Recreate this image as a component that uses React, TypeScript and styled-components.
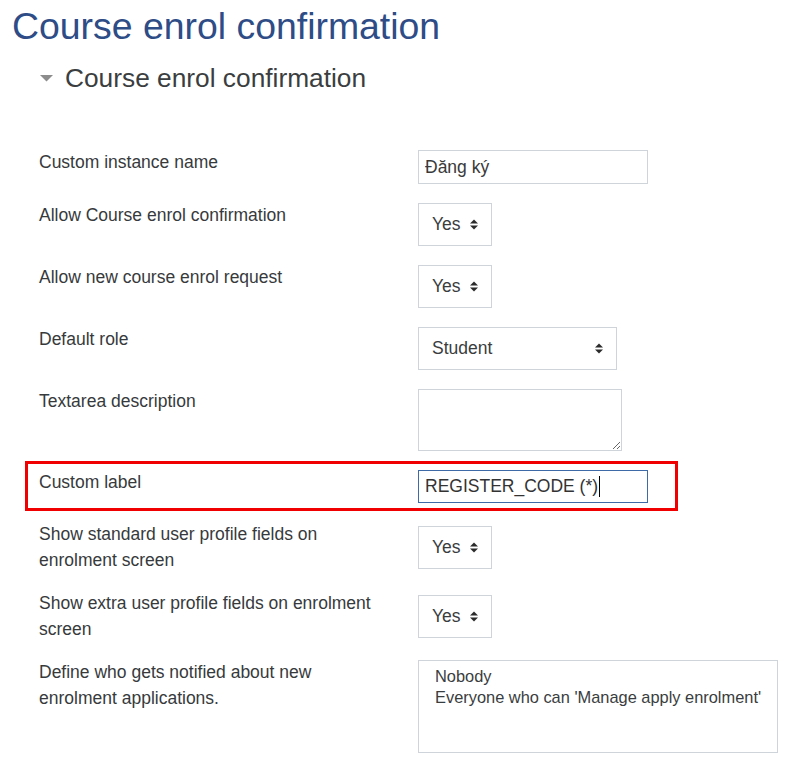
import React from "react";
import styled, { createGlobalStyle } from "styled-components";

const GlobalStyle = createGlobalStyle`
  html, body { margin: 0; padding: 0; background: #ffffff; }
  body { font-family: "Liberation Sans", Arial, sans-serif; color: #373a3c; }
  *, *::before, *::after { box-sizing: border-box; }
`;

const Page = styled.div`
  padding: 4px 12px 0 12px;
  width: 805px;
`;

const Title = styled.h1`
  margin: 0;
  font-size: 37.4px;
  line-height: 45px;
  font-weight: 400;
  color: #2e4c86;
`;

const Section = styled.section`
  margin-top: 13px;
`;

const Legend = styled.h2`
  margin: 0;
  padding-left: 28px;
  display: flex;
  align-items: center;
  gap: 12px;
  font-size: 26.3px;
  line-height: 32px;
  font-weight: 400;
  color: #3b3e40;
`;

const Fields = styled.div`
  margin-top: 55px;
  padding-left: 27px;
`;

const Row = styled.div<{ $highlight?: boolean }>`
  position: relative;
  display: flex;
  align-items: stretch;
  margin-bottom: 17px;
  ${(p) =>
    p.$highlight
      ? `
    &::after {
      content: "";
      position: absolute;
      left: -14px;
      top: -8px;
      width: 653px;
      bottom: -7px;
      border: 3px solid #f00000;
      pointer-events: none;
    }
  `
      : ""}
`;

const Label = styled.label`
  flex: 0 0 379px;
  padding-right: 30px;
  font-size: 17.5px;
  line-height: 26px;
  color: #373a3c;
`;

const Control = styled.div`
  flex: 1;
  display: flex;
  align-items: center;
  & > * {
    margin: 1px 0;
  }
`;

const TextInput = styled.input`
  width: 230px;
  height: 34px;
  border: 1px solid #ced4da;
  border-radius: 0;
  padding: 0 6px;
  font-family: "Liberation Sans", Arial, sans-serif;
  font-size: 17.5px;
  color: #3a3a3a;
  background: #fff;
  outline: none;
`;

const FocusedInput = styled.div`
  width: 230px;
  height: 33px;
  border: 1px solid #3f6aa8;
  padding: 0 6px;
  display: flex;
  align-items: center;
  font-size: 17.5px;
  color: #333;
  background: #fff;
`;

const Caret = styled.span`
  display: inline-block;
  width: 1px;
  height: 21px;
  background: #000;
  margin-left: 1px;
`;

const SelectBox = styled.div<{ $width?: number }>`
  height: 43px;
  ${(p) => (p.$width ? `width: ${p.$width}px;` : "")}
  display: inline-flex;
  align-items: center;
  justify-content: space-between;
  gap: 9px;
  padding: 0 13px 0 13px;
  border: 1px solid #ced4da;
  font-size: 17.5px;
  color: #3a3d40;
  background: #fff;
`;

const TextArea = styled.textarea`
  width: 204px;
  height: 62px;
  border: 1px solid #ced4da;
  border-radius: 0;
  font-family: "Liberation Sans", Arial, sans-serif;
  font-size: 17.5px;
  outline: none;
  resize: both;
`;

const ListBox = styled.div`
  width: 360px;
  height: 93px;
  border: 1px solid #ced4da;
  padding: 5px 0 0 16px;
  font-size: 16.4px;
  line-height: 21px;
  color: #3a3d40;
  align-self: flex-start;
`;

const Option = styled.div``;

const SortIcon = () => (
  <svg width="8" height="11" viewBox="0 0 8 11" aria-hidden="true">
    <path d="M0 4.5 L4 0.5 L8 4.5 Z" fill="#2b2b2b" />
    <path d="M0 6.5 L4 10.5 L8 6.5 Z" fill="#2b2b2b" />
  </svg>
);

const Triangle = () => (
  <svg width="13" height="7" viewBox="0 0 13 7" aria-hidden="true">
    <path d="M0 0 L13 0 L6.5 6.5 Z" fill="#8c8c8c" />
  </svg>
);

const Select = ({ value, width }: { value: string; width?: number }) => (
  <SelectBox $width={width}>
    <span>{value}</span>
    <SortIcon />
  </SelectBox>
);

export default function App() {
  return (
    <>
      <GlobalStyle />
      <Page>
        <Title>Course enrol confirmation</Title>
        <Section>
          <Legend>
            <Triangle />
            Course enrol confirmation
          </Legend>
          <Fields>
            <Row>
              <Label>Custom instance name</Label>
              <Control>
                <TextInput readOnly value="Đăng ký" />
              </Control>
            </Row>
            <Row>
              <Label>Allow Course enrol confirmation</Label>
              <Control>
                <Select value="Yes" />
              </Control>
            </Row>
            <Row>
              <Label>Allow new course enrol request</Label>
              <Control>
                <Select value="Yes" />
              </Control>
            </Row>
            <Row>
              <Label>Default role</Label>
              <Control>
                <Select value="Student" width={199} />
              </Control>
            </Row>
            <Row>
              <Label>Textarea description</Label>
              <Control>
                <TextArea readOnly />
              </Control>
            </Row>
            <Row $highlight>
              <Label>Custom label</Label>
              <Control>
                <FocusedInput>
                  REGISTER_CODE (*)
                  <Caret />
                </FocusedInput>
              </Control>
            </Row>
            <Row>
              <Label>Show standard user profile fields on enrolment screen</Label>
              <Control>
                <Select value="Yes" />
              </Control>
            </Row>
            <Row>
              <Label>Show extra user profile fields on enrolment screen</Label>
              <Control>
                <Select value="Yes" />
              </Control>
            </Row>
            <Row>
              <Label>Define who gets notified about new enrolment applications.</Label>
              <Control>
                <ListBox role="listbox">
                  <Option>Nobody</Option>
                  <Option>Everyone who can 'Manage apply enrolment'</Option>
                </ListBox>
              </Control>
            </Row>
          </Fields>
        </Section>
      </Page>
    </>
  );
}
